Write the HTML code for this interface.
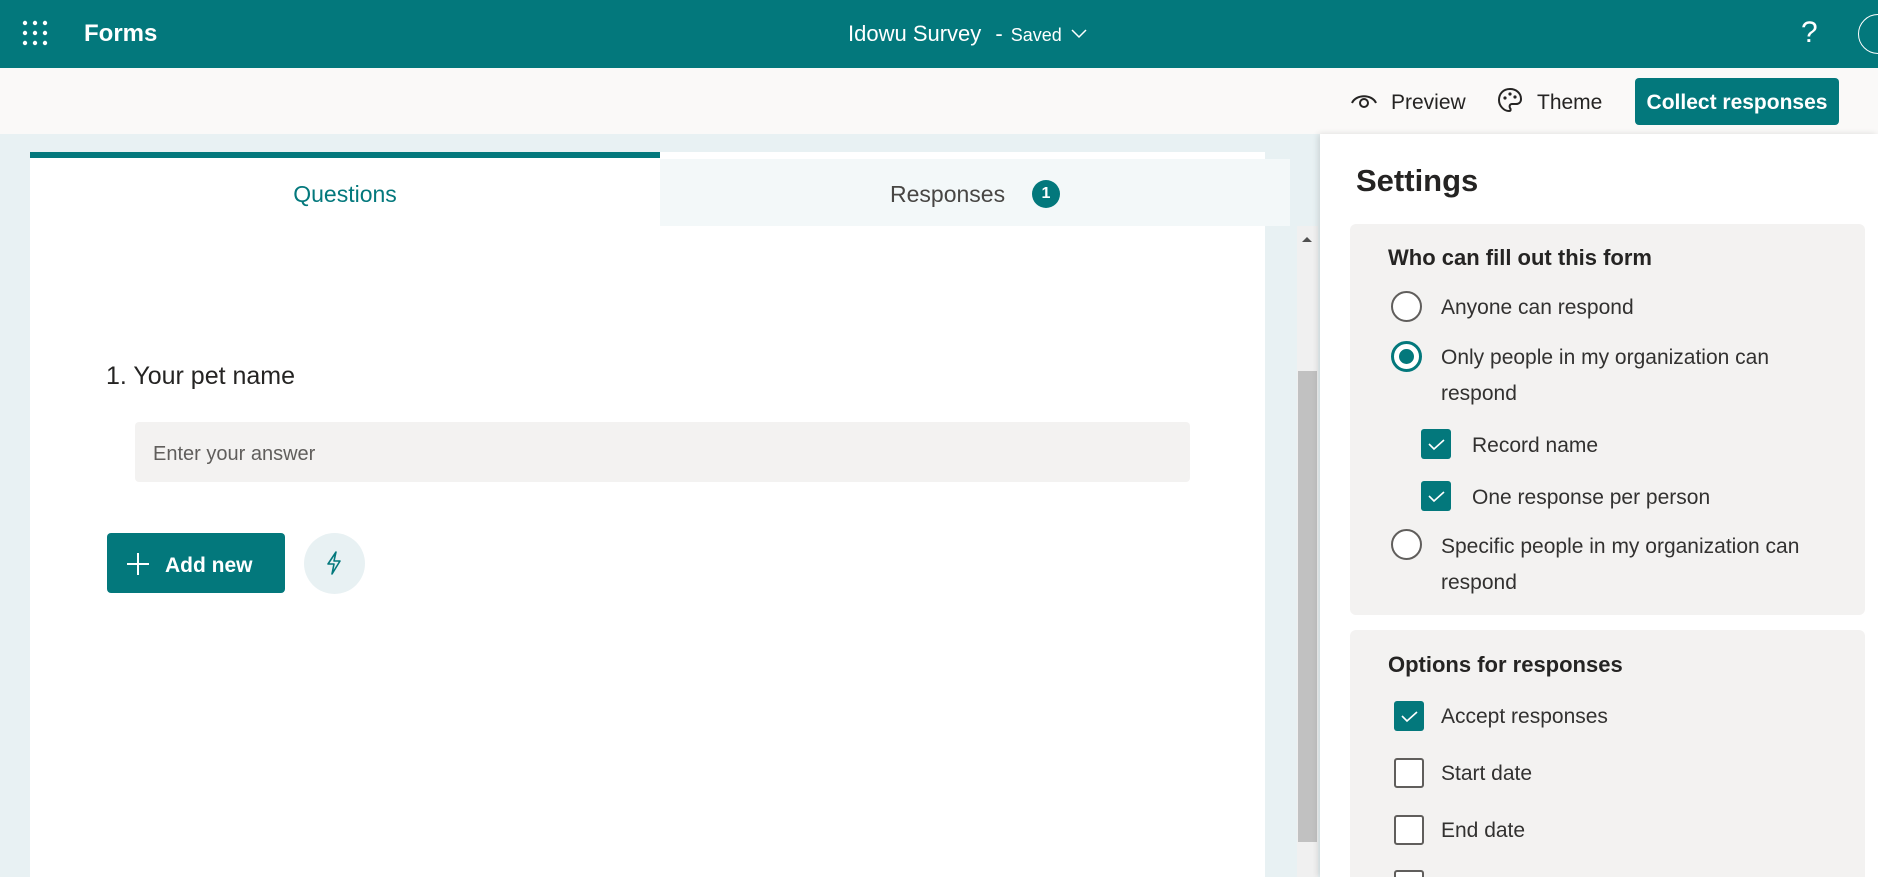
<!DOCTYPE html>
<html style="overflow:hidden;height:877px"><head><meta charset="utf-8"><style>
*{margin:0;padding:0;box-sizing:border-box}
body{width:1878px;height:877px;overflow:hidden;font-family:"Segoe UI","Liberation Sans",sans-serif;background:#e8f1f3;position:relative;color:#252423}
.a{position:absolute}
.top{left:0;top:0;width:1878px;height:68px;background:#03787c;color:#fff}
.bar2{left:0;top:68px;width:1878px;height:66px;background:#faf9f8}
.t{white-space:nowrap}
.rad{width:31px;height:31px;border:2px solid #605e5c;border-radius:50%;background:#fff}
.cb{width:30px;height:30px;border-radius:3px;background:#03787c}
.cbo{width:30px;height:30px;border-radius:3px;border:2px solid #605e5c;background:#fff}
.s{font-size:21px;color:#323130}
</style></head><body>
<div class="a top">
<svg class="a" style="left:22px;top:20px" width="26" height="26" viewBox="0 0 26 26" fill="#fff"><circle cx="3" cy="3" r="2.2"/><circle cx="13" cy="3" r="2.2"/><circle cx="23" cy="3" r="2.2"/><circle cx="3" cy="13" r="2.2"/><circle cx="13" cy="13" r="2.2"/><circle cx="23" cy="13" r="2.2"/><circle cx="3" cy="23" r="2.2"/><circle cx="13" cy="23" r="2.2"/><circle cx="23" cy="23" r="2.2"/></svg>
<div class="a t" style="left:84px;top:20px;font-size:24px;font-weight:bold">Forms</div>
<div class="a t" style="left:848px;top:21px;font-size:22px">Idowu Survey <span style="margin:0 8px">-</span><span style="font-size:18px">Saved</span></div>
<svg class="a" style="left:1071px;top:29px" width="16" height="10" viewBox="0 0 16 10"><path d="M1 1l7 7 7-7" stroke="#fff" stroke-width="1.5" fill="none"/></svg>
<div class="a t" style="left:1801px;top:16px;font-size:30px;font-weight:300">?</div>
<div class="a" style="left:1858px;top:14px;width:40px;height:40px;border:1.5px solid #fff;border-radius:50%"></div>
</div>
<div class="a bar2">
<svg class="a" style="left:1350px;top:22px" width="28" height="20" viewBox="0 0 28 20"><path d="M2 13C6 4 22 4 26 13" stroke="#252423" stroke-width="2" fill="none"/><circle cx="14" cy="13" r="4" stroke="#252423" stroke-width="2" fill="none"/></svg>
<div class="a t" style="left:1391px;top:23px;font-size:21px">Preview</div>
<svg class="a" style="left:1497px;top:19px" width="26" height="28" viewBox="0 0 26 28"><path d="M13 2C6 2 2 7 2 13c0 6 5 11 10 11 2 0 2-2 1-3-1-2 0-4 2-4h4c3 0 5-2 5-5C24 6 19 2 13 2z" stroke="#252423" stroke-width="2" fill="none"/><circle cx="8" cy="11" r="1.6" fill="#252423"/><circle cx="13" cy="7" r="1.6" fill="#252423"/><circle cx="18" cy="10" r="1.6" fill="#252423"/></svg>
<div class="a t" style="left:1537px;top:23px;font-size:21px">Theme</div>
<div class="a t" style="left:1635px;top:10px;width:204px;height:47px;background:#03787c;border-radius:4px;color:#fff;font-size:21px;font-weight:bold;text-align:center;line-height:49px">Collect responses</div>
</div>
<div class="a" style="left:30px;top:152px;width:1235px;height:725px;background:#fff"></div>
<div class="a" style="left:30px;top:152px;width:630px;height:6px;background:#03787c"></div>
<div class="a" style="left:660px;top:159px;width:630px;height:67px;background:#f3f8f9"></div>
<div class="a t" style="left:30px;top:181px;width:630px;text-align:center;font-size:23px;color:#03787c">Questions</div>
<div class="a t" style="left:890px;top:181px;font-size:23px;color:#484644">Responses</div>
<div class="a" style="left:1032px;top:180px;width:28px;height:28px;border-radius:50%;background:#03787c;color:#fff;font-size:16px;font-weight:bold;text-align:center;line-height:28px">1</div>
<div class="a" style="left:1297px;top:226px;width:21px;height:651px;background:#f0f0f0"></div>
<div class="a" style="left:1298px;top:371px;width:19px;height:471px;background:#c1c1c1"></div>
<svg class="a" style="left:1301px;top:235px" width="12" height="8"><path d="M1 7L6 2 11 7z" fill="#505050"/></svg>
<div class="a t" style="left:106px;top:362px;font-size:25px;color:#252423">1. Your pet name</div>
<div class="a" style="left:135px;top:422px;width:1055px;height:60px;background:#f3f2f1;border-radius:4px"></div>
<div class="a t" style="left:153px;top:443px;font-size:20px;color:#605e5c">Enter your answer</div>
<div class="a" style="left:107px;top:533px;width:178px;height:60px;background:#03787c;border-radius:4px"></div>
<svg class="a" style="left:127px;top:553px" width="22" height="22"><path d="M11 0v22M0 11h22" stroke="#fff" stroke-width="2"/></svg>
<div class="a t" style="left:165px;top:554px;font-size:21px;font-weight:bold;color:#fff">Add new</div>
<div class="a" style="left:304px;top:533px;width:61px;height:61px;border-radius:50%;background:#e8f1f3"></div>
<svg class="a" style="left:325px;top:551px" width="18" height="24" viewBox="0 0 18 24"><path d="M11 1L3 13h6l-2 10 8-13H9z" stroke="#03787c" stroke-width="1.6" fill="none" stroke-linejoin="round"/></svg>
<div class="a" style="left:1320px;top:134px;width:558px;height:743px;background:#fff;box-shadow:-2px 0 6px rgba(0,0,0,.12)"></div>
<div class="a t" style="left:1356px;top:163px;font-size:31px;font-weight:600;color:#252423">Settings</div>
<div class="a" style="left:1350px;top:224px;width:515px;height:391px;background:#f3f2f1;border-radius:6px"></div>
<div class="a" style="left:1350px;top:630px;width:515px;height:247px;background:#f3f2f1;border-radius:6px 6px 0 0"></div>
<div class="a t" style="left:1388px;top:245px;font-size:22px;font-weight:600">Who can fill out this form</div>
<div class="a rad" style="left:1391px;top:291px"></div>
<div class="a t s" style="left:1441px;top:296px">Anyone can respond</div>
<div class="a rad" style="left:1391px;top:341px;border:3px solid #03787c"><div style="margin:5px;width:15px;height:15px;border-radius:50%;background:#03787c"></div></div>
<div class="a s" style="left:1441px;top:340px;line-height:36px">Only people in my organization can<br>respond</div>
<div class="a cb" style="left:1421px;top:429px"></div>
<div class="a t s" style="left:1472px;top:434px">Record name</div>
<div class="a cb" style="left:1421px;top:481px"></div>
<div class="a t s" style="left:1472px;top:486px">One response per person</div>
<div class="a rad" style="left:1391px;top:529px"></div>
<div class="a s" style="left:1441px;top:529px;line-height:36px">Specific people in my organization can<br>respond</div>
<div class="a t" style="left:1388px;top:652px;font-size:22px;font-weight:600">Options for responses</div>
<div class="a cb" style="left:1394px;top:701px"></div>
<div class="a t s" style="left:1441px;top:705px">Accept responses</div>
<div class="a cbo" style="left:1394px;top:758px"></div>
<div class="a t s" style="left:1441px;top:762px">Start date</div>
<div class="a cbo" style="left:1394px;top:815px"></div>
<div class="a t s" style="left:1441px;top:819px">End date</div>
<div class="a cbo" style="left:1394px;top:870px"></div>
<svg class="a" style="left:0;top:0" width="1878" height="877"><g stroke="#fff" stroke-width="1.6" fill="none"><path d="M1429 444l5 5 10-9"/><path d="M1429 496l5 5 10-9"/><path d="M1402 716l5 5 10-9"/></g></svg>
</body></html>
